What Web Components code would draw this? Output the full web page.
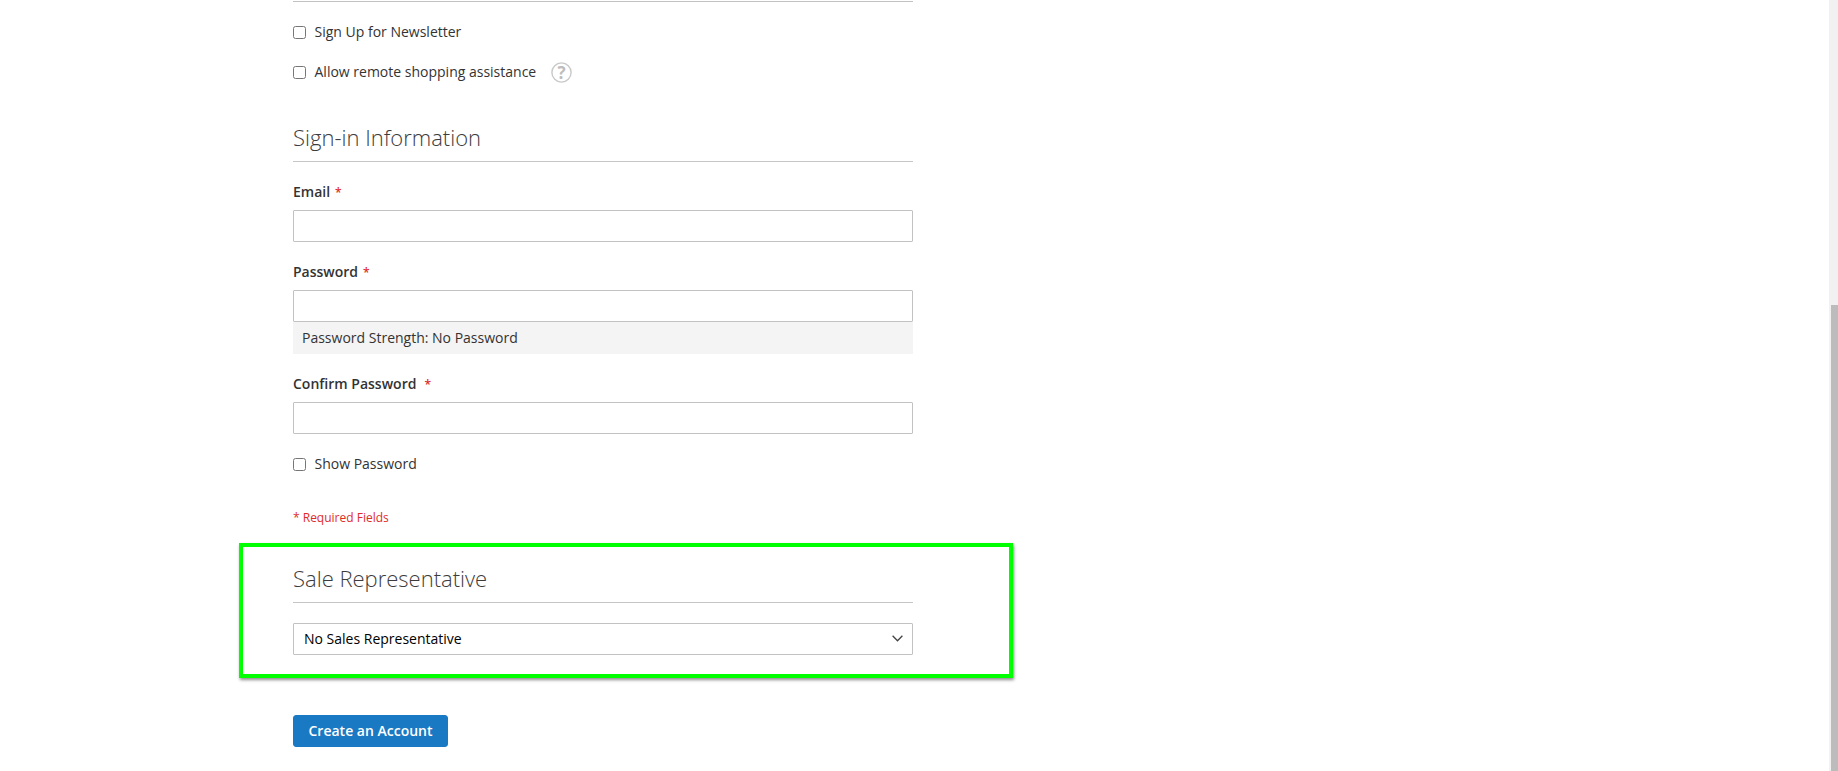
<!DOCTYPE html>
<html lang="en">
<head>
<meta charset="utf-8">
<title>Create New Customer Account</title>
<style>
  html, body { margin: 0; height: 100%; overflow: hidden; background: #fff; }
  body { font: 14px/20px "Open Sans", "Liberation Sans", sans-serif; color: #333; }
</style>
</head>
<body>
<account-page></account-page>

<script>
class FormCheck extends HTMLElement {
  constructor() {
    super();
    this.attachShadow({ mode: "open" }).innerHTML = `
      <style>
        :host { display: flex; align-items: center; height: 20px; }
        input { width: 13px; height: 13px; margin: 0 8.5px 0 0; flex: none; }
        label { white-space: nowrap; }
      </style>
      <input type="checkbox" id="box"><label for="box"><slot></slot></label><slot name="after"></slot>`;
  }
}

class HelpIcon extends HTMLElement {
  constructor() {
    super();
    this.attachShadow({ mode: "open" }).innerHTML = `
      <style>
        :host { display: block; width: 21px; height: 21px; margin-left: 15px; }
        svg { display: block; }
        text { font: 700 17px "Open Sans", sans-serif; fill: #bdbdbd; }
      </style>
      <svg width="21" height="21" viewBox="0 0 21 21" aria-hidden="true">
        <circle cx="10.5" cy="10.5" r="9.6" fill="none" stroke="#c8c8c8" stroke-width="1.4"/>
        <text x="10.5" y="16.6" text-anchor="middle">?</text>
      </svg>`;
  }
}

class FormLegend extends HTMLElement {
  constructor() {
    super();
    this.attachShadow({ mode: "open" }).innerHTML = `
      <style>
        :host {
          display: block;
          font-size: 22px;
          font-weight: 300;
          line-height: 28px;
          padding-bottom: 10px;
          border-bottom: 1px solid #c6c6c6;
          color: #3c3c3c;
          white-space: nowrap;
        }
      </style>
      <slot></slot>`;
  }
}

class FormField extends HTMLElement {
  constructor() {
    super();
    this.attachShadow({ mode: "open" }).innerHTML = `
      <style>
        :host { display: block; }
        .label { display: block; font-weight: 600; margin-bottom: 7px; white-space: nowrap; }
        .star { color: #e02b27; font-size: 12px; margin-left: var(--star-gap, 5px); }
        input {
          display: block;
          box-sizing: border-box;
          width: 100%;
          height: 32px;
          margin: 0;
          padding: 0 9px;
          background: #fff;
          border: 1px solid #c2c2c2;
          border-radius: 1px;
          font: inherit;
        }
      </style>
      <span class="label"><slot></slot><span class="star">*</span></span>
      <input type="${this.getAttribute("type") || "text"}">
      <slot name="below"></slot>`;
  }
}

class StrengthMeter extends HTMLElement {
  constructor() {
    super();
    this.attachShadow({ mode: "open" }).innerHTML = `
      <style>
        :host { display: block; height: 32px; line-height: 32px; padding: 0 9px; background: #f4f4f4; }
      </style>
      <slot></slot>`;
  }
}

class RepSelect extends HTMLElement {
  constructor() {
    super();
    this.attachShadow({ mode: "open" }).innerHTML = `
      <style>
        :host { display: block; position: relative; }
        select {
          display: block;
          box-sizing: border-box;
          width: 100%;
          height: 32px;
          margin: 0;
          padding: 0 30px 0 10px;
          appearance: none;
          background: #fff;
          color: #000;
          border: 1px solid #c2c2c2;
          border-radius: 1px;
          font: inherit;
        }
        /* chevron sits over the native control */
        svg { position: absolute; right: 10px; top: 12px; pointer-events: none; }
      </style>
      <select><option>No Sales Representative</option></select>
      <svg width="11" height="7" viewBox="0 0 11 7" aria-hidden="true">
        <path d="M.6.8 5.5 5.8 10.4.8" fill="none" stroke="#444" stroke-width="1.3"/>
      </svg>`;
  }
}

class HighlightBox extends HTMLElement {
  constructor() {
    super();
    this.attachShadow({ mode: "open" }).innerHTML = `
      <style>
        :host {
          display: block;
          width: 774px;
          box-sizing: border-box;
          margin-left: -54px;
          padding: 17px 96px 19px 50px;
          border: 4px solid #00ff00;
          box-shadow: 1px 2px 3px rgba(0, 0, 0, .45);
        }
      </style>
      <slot></slot>`;
  }
}

class PrimaryButton extends HTMLElement {
  constructor() {
    super();
    this.attachShadow({ mode: "open" }).innerHTML = `
      <style>
        :host { display: block; }
        button {
          display: block;
          height: 32px;
          padding: 0 14.5px;
          background: #1979c3;
          border: 1px solid #1979c3;
          border-radius: 3px;
          color: #fff;
          font: 600 14px/18px "Open Sans", sans-serif;
        }
      </style>
      <button type="button"><slot></slot></button>`;
  }
}

class PageScrollbar extends HTMLElement {
  constructor() {
    super();
    this.attachShadow({ mode: "open" }).innerHTML = `
      <style>
        :host { display: flex; flex-direction: column; width: 9px; flex: none; background: #f1f1f1; }
        .gap { height: 305px; }
        .thumb { flex: 1; margin-left: 2px; background: #bcbcbc; }
      </style>
      <div class="gap"></div><div class="thumb"></div>`;
  }
}

class AccountPage extends HTMLElement {
  constructor() {
    super();
    this.attachShadow({ mode: "open" }).innerHTML = `
      <style>
        :host { display: flex; height: 771px; overflow: hidden; }
        main { flex: 1; min-width: 0; padding-left: 293px; }
        form { width: 620px; }
        .cut { height: 1px; border-bottom: 1px solid #c2c2c2; }
        .news { margin-top: 20px; }
        .remote { margin-top: 20px; }
        .signin { margin-top: 41px; }
        .email { margin-top: 20px; }
        .password, .confirm { margin-top: 20px; }
        .show { margin-top: 20px; }
        .req { margin-top: 35px; color: #e02b27; font-size: 12px; line-height: 18px; }
        .rep { margin-top: 16px; }
        .rep form-legend { margin-bottom: 20px; }
        primary-button { margin-top: 37px; }
      </style>
      <main>
        <form onsubmit="return false">
          <div class="cut"></div>
          <form-check class="news">Sign Up for Newsletter</form-check>
          <form-check class="remote">Allow remote shopping assistance<help-icon slot="after"></help-icon></form-check>
          <form-legend class="signin">Sign-in Information</form-legend>
          <form-field class="email" type="email">Email</form-field>
          <form-field class="password" type="password">Password<strength-meter slot="below">Password Strength: No Password</strength-meter></form-field>
          <form-field class="confirm" type="password" style="--star-gap: 8px">Confirm Password</form-field>
          <form-check class="show">Show Password</form-check>
          <div class="req">* Required Fields</div>
          <highlight-box class="rep">
            <form-legend>Sale Representative</form-legend>
            <rep-select></rep-select>
          </highlight-box>
          <primary-button>Create an Account</primary-button>
        </form>
      </main>
      <page-scrollbar></page-scrollbar>`;
  }
}

customElements.define("form-check", FormCheck);
customElements.define("help-icon", HelpIcon);
customElements.define("form-legend", FormLegend);
customElements.define("form-field", FormField);
customElements.define("strength-meter", StrengthMeter);
customElements.define("rep-select", RepSelect);
customElements.define("highlight-box", HighlightBox);
customElements.define("primary-button", PrimaryButton);
customElements.define("page-scrollbar", PageScrollbar);
customElements.define("account-page", AccountPage);
</script>
</body>
</html>
